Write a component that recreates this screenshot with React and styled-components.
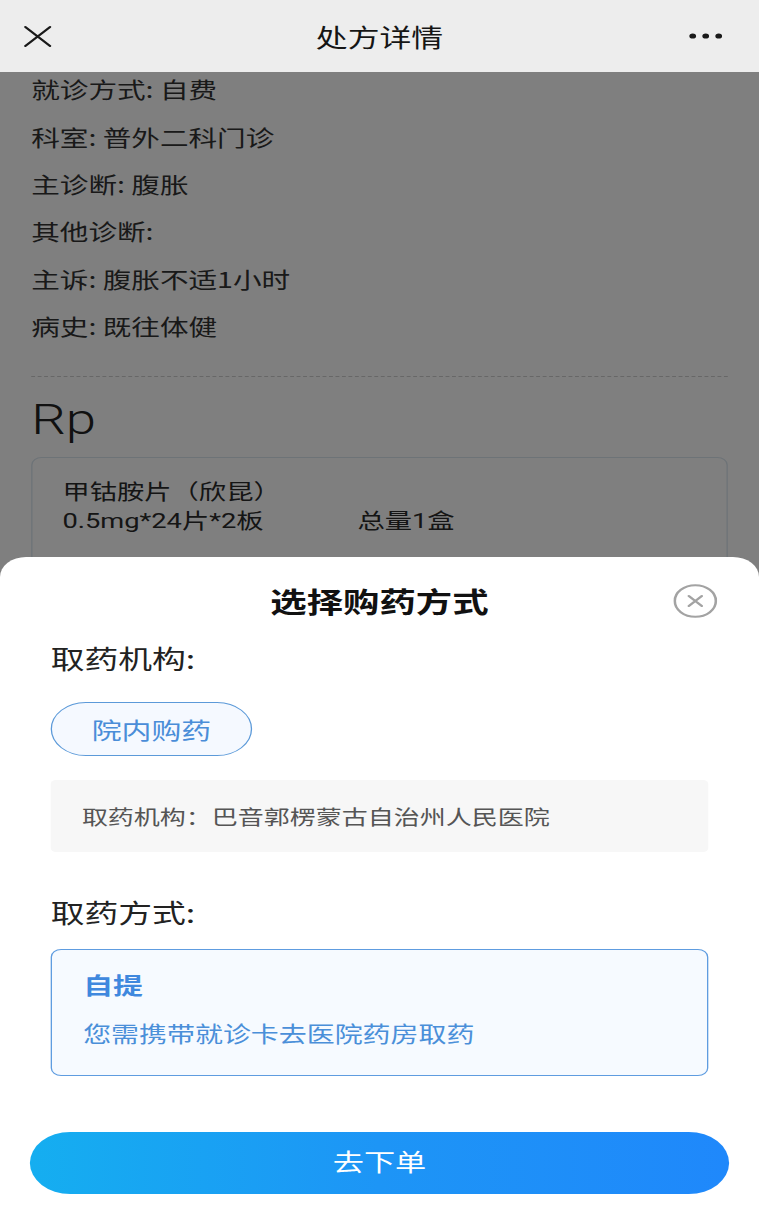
import React from "react";
import styled, { createGlobalStyle } from "styled-components";

const STRETCH = 759 / 584;

const GlobalStyle = createGlobalStyle`
  html, body {
    margin: 0;
    padding: 0;
    overflow: hidden;
    background: #ffffff;
  }
  body {
    font-family: "Noto Sans CJK SC", "Noto Sans", sans-serif;
  }
  * { box-sizing: border-box; }
`;

const Stage = styled.div`
  width: 584px;
  height: 1209px;
  transform: scaleX(${STRETCH});
  transform-origin: 0 0;
  display: flex;
  flex-direction: column;
`;

const NavBar = styled.header`
  height: 72px;
  flex: 0 0 72px;
  background: #ededed;
  display: grid;
  grid-template-columns: 1fr auto 1fr;
  align-items: center;
  padding: 0 18px;
`;

const NavTitle = styled.h1`
  margin: 0;
  font-size: 24.5px;
  font-weight: 400;
  color: #151515;
  line-height: 1;
  padding-top: 2px;
`;

const NavIcon = styled.svg`
  display: block;
  justify-self: ${(p) => (p.$end ? "end" : "start")};
  margin-right: ${(p) => (p.$end ? "10px" : "0")};
`;

const Body = styled.main`
  flex: 1;
  position: relative;
  overflow: hidden;
  background: #ffffff;
`;

const Page = styled.div`
  padding: 0 24px;
  margin-top: -6.7px;
`;

const InfoLine = styled.div`
  height: 47.4px;
  line-height: 47.4px;
  font-size: 22px;
  color: #333;
  white-space: nowrap;
`;

const Divider = styled.hr`
  margin: 26px 0 0;
  border: 0;
  border-top: 1px dashed #cfcfcf;
`;

const RpTitle = styled.div`
  margin-top: 18px;
  font-family: "Roboto", "Noto Sans CJK SC", sans-serif;
  font-size: 42px;
  font-weight: 300;
  line-height: 50px;
  color: #222;
`;

const DrugCard = styled.div`
  margin-top: 12px;
  border: 1.5px solid #dbe6ef;
  border-radius: 8px;
  padding: 20px 24px 40px 23px;
  background: #fff;
`;

const DrugLine = styled.div`
  display: flex;
  font-size: 21px;
  line-height: 29px;
  color: #2a2a2a;
  white-space: nowrap;
  font-family: "Roboto", "Noto Sans CJK SC", sans-serif;
`;

const DrugSpec = styled.span`
  width: 227px;
`;

const Overlay = styled.div`
  position: absolute;
  inset: 0;
  background: rgba(0, 0, 0, 0.5);
`;

const Sheet = styled.section`
  position: absolute;
  left: 0;
  right: 0;
  bottom: 0;
  height: 652px;
  background: #ffffff;
  border-radius: 20px 20px 0 0;
  padding: 0 39px;
  display: flex;
  flex-direction: column;
`;

const SheetHeader = styled.div`
  display: grid;
  grid-template-columns: 1fr auto 1fr;
  align-items: center;
  height: 40px;
  margin: 24px -7px 0 -7px;
`;

const SheetTitle = styled.h2`
  grid-column: 2;
  margin: 0;
  font-size: 28px;
  font-weight: 700;
  color: #111;
  line-height: 40px;
`;

const CloseIcon = styled.svg`
  justify-self: end;
  display: block;
`;

const Label = styled.div`
  font-size: 26px;
  line-height: 36px;
  color: #222;
  margin-top: ${(p) => p.$top}px;
`;

const Pill = styled.button`
  margin-top: 26px;
  width: 155px;
  height: 54px;
  border: 1.5px solid #5c9ad9;
  border-radius: 27px;
  background: #f5f9ff;
  color: #4a8dd8;
  font-family: inherit;
  font-size: 23px;
  padding: 0;
  align-self: flex-start;
`;

const InfoBox = styled.div`
  margin-top: 24px;
  height: 72px;
  background: #f7f7f7;
  border-radius: 4px;
  display: flex;
  align-items: center;
  padding-left: 24px;
  font-size: 20px;
  color: #555;
  white-space: nowrap;
`;

const OptionBox = styled.div`
  margin-top: 19px;
  height: 127px;
  border: 1.5px solid #5e9ce0;
  border-radius: 8px;
  background: #f6faff;
  padding: 18.5px 24px 0;
`;

const OptionTitle = styled.div`
  font-size: 23px;
  font-weight: 700;
  line-height: 30px;
  color: #3f88de;
`;

const OptionDesc = styled.div`
  margin-top: 19px;
  font-size: 21.5px;
  line-height: 30px;
  color: #4a8fd9;
  white-space: nowrap;
`;

const SubmitButton = styled.button`
  margin: 56px -16px 0;
  height: 62px;
  border: 0;
  border-radius: 31px;
  background: linear-gradient(90deg, #15aef0 0%, #1d95f6 50%, #1f88fb 100%);
  color: #ffffff;
  font-family: inherit;
  font-size: 24px;
  line-height: 1;
  padding: 0 0 4px;
`;

const infoRows = [
  "就诊方式: 自费",
  "科室: 普外二科门诊",
  "主诊断: 腹胀",
  "其他诊断:",
  "主诉: 腹胀不适1小时",
  "病史: 既往体健",
];

export default function App() {
  return (
    <>
      <GlobalStyle />
      <Stage>
        <NavBar>
          <NavIcon width="22" height="21" viewBox="0 0 22 21">
            <path d="M1.5 1 L20.5 20 M20.5 1 L1.5 20" stroke="#1a1a1a" strokeWidth="1.8" fill="none" strokeLinecap="round" />
          </NavIcon>
          <NavTitle>处方详情</NavTitle>
          <NavIcon $end width="26" height="8" viewBox="0 0 26 8">
            <circle cx="3" cy="4" r="2.6" fill="#1a1a1a" />
            <circle cx="13" cy="4" r="2.6" fill="#1a1a1a" />
            <circle cx="23" cy="4" r="2.6" fill="#1a1a1a" />
          </NavIcon>
        </NavBar>
        <Body>
          <Page>
            {infoRows.map((r) => (
              <InfoLine key={r}>{r}</InfoLine>
            ))}
            <Divider />
            <RpTitle>Rp</RpTitle>
            <DrugCard>
              <DrugLine>甲钴胺片（欣昆）</DrugLine>
              <DrugLine>
                <DrugSpec>0.5mg*24片*2板</DrugSpec>
                <span>总量1盒</span>
              </DrugLine>
            </DrugCard>
          </Page>
          <Overlay />
          <Sheet>
            <SheetHeader>
              <SheetTitle>选择购药方式</SheetTitle>
              <CloseIcon width="34" height="34" viewBox="0 0 34 34">
                <circle cx="17" cy="17" r="15.8" stroke="#a3a3a3" strokeWidth="2" fill="none" />
                <path d="M12 12 L22 22 M22 12 L12 22" stroke="#a3a3a3" strokeWidth="2" strokeLinecap="round" />
              </CloseIcon>
            </SheetHeader>
            <Label $top={19}>取药机构:</Label>
            <Pill>院内购药</Pill>
            <InfoBox>取药机构：巴音郭楞蒙古自治州人民医院</InfoBox>
            <Label $top={42}>取药方式:</Label>
            <OptionBox>
              <OptionTitle>自提</OptionTitle>
              <OptionDesc>您需携带就诊卡去医院药房取药</OptionDesc>
            </OptionBox>
            <SubmitButton>去下单</SubmitButton>
          </Sheet>
        </Body>
      </Stage>
    </>
  );
}
